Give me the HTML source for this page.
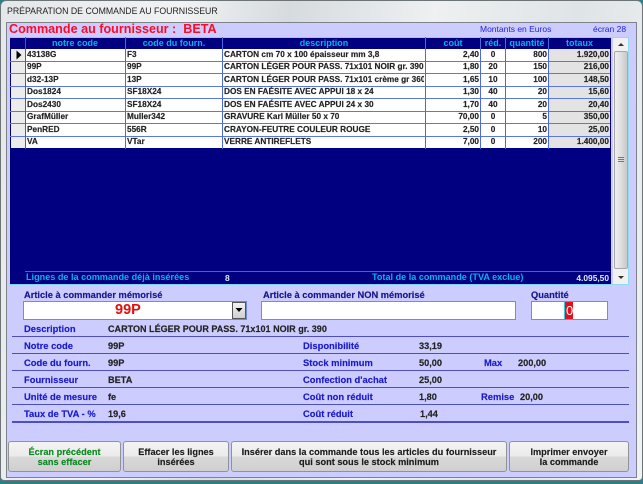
<!DOCTYPE html>
<html><head><meta charset="utf-8"><style>
*{box-sizing:border-box}
html,body{margin:0;padding:0}
body{width:643px;height:484px;overflow:hidden;position:relative;background:#2b7f86;font-family:"Liberation Sans",sans-serif}
.a,.a *{position:absolute}
.t{white-space:nowrap;font-size:10px;line-height:12px}
.win{left:0;top:0;width:643px;height:481px;border-radius:6px 6px 4px 4px;border:1px solid #6d7478;background:linear-gradient(100deg,#e4e7e9 0%,#f1f2f3 25%,#d6dbde 40%,#eef0f1 60%,#dfe4e6 80%,#f0f2f3 100%)}
.panel{left:6px;top:22px;width:631px;height:456px;background:#ccccff;border:1px solid #7d8388}
.h{color:#00b4f0;font-weight:bold;font-size:9px;text-align:center;top:37px;height:12px;line-height:12px}
.r{color:#222;font-weight:bold;font-size:8.25px;line-height:12px;white-space:nowrap;overflow:hidden;-webkit-text-stroke:0.15px #222}
.l{color:#1a1acc;font-weight:bold;font-size:9.4px;line-height:12px;white-space:nowrap;-webkit-text-stroke:0.15px #1a1acc}
.v{color:#222;font-weight:bold;font-size:9.2px;line-height:12px;white-space:nowrap;-webkit-text-stroke:0.15px #222}
.hl{left:12px;height:1px;background:#4d4dc4}
.b{top:441px;height:31px;border:1px solid #8f9396;border-radius:3px;background:linear-gradient(#f3f3f3 0,#ebebeb 48%,#d9d9d9 52%,#cfcfcf 100%);text-align:center;font-family:"Liberation Sans",sans-serif;font-weight:bold;font-size:9.2px;line-height:10px;padding-top:5px;color:#1c1c1c;white-space:nowrap;-webkit-text-stroke:0.15px currentColor}
.lab{color:#16168c;font-family:"Liberation Sans",sans-serif;font-weight:bold;font-size:9.3px;line-height:11px;white-space:nowrap;-webkit-text-stroke:0.15px #16168c}
</style></head><body>
<div class="a" style="left:0;top:0;width:643px;height:484px">
<div class="win"></div>
<div class="t" style="left:7px;top:5px;color:#222;font-size:8.75px;line-height:12px">PRÉPARATION DE COMMANDE AU FOURNISSEUR</div>
<div class="panel"></div>

<div class="t" style="left:9px;top:22px;color:#ff0a28;font-weight:bold;font-size:12.6px;line-height:15px;word-spacing:0">Commande au fournisseur :&nbsp; BETA</div>
<div class="t" style="left:480px;top:23px;color:#2222e0;font-size:8.5px;line-height:12px">Montants en Euros</div>
<div class="t" style="left:593px;top:23px;color:#2222e0;font-size:8.5px;line-height:12px">écran 28</div>

<!-- grid -->
<div style="left:10px;top:37px;width:601px;height:248px;background:#000080"></div>
<div style="left:10px;top:37px;width:619px;height:1px;background:#7fd4f0"></div>
<div style="left:10px;top:284px;width:601px;height:1px;background:#7fd4f0"></div>

<div class="h" style="left:25px;width:100px">notre code</div>
<div class="h" style="left:126px;width:96px">code du fourn.</div>
<div class="h" style="left:223px;width:202px">description</div>
<div class="h" style="left:426px;width:54px">coût</div>
<div class="h" style="left:481px;width:24px">réd.</div>
<div class="h" style="left:506px;width:42px">quantité</div>
<div class="h" style="left:549px;width:61px">totaux</div>

<!-- white body -->
<div style="left:25px;top:49px;width:523px;height:100px;background:#fff"></div>
<div style="left:549px;top:49px;width:61px;height:100px;background:#e3e3e3"></div>
<div style="left:11px;top:49px;width:14px;height:100px;background:#ececec"></div>

<!-- horizontal lines -->
<div style="left:10px;top:61px;width:600px;height:1px;background:#5a78e0"></div>
<div style="left:10px;top:73px;width:600px;height:1px;background:#5a78e0"></div>
<div style="left:10px;top:86px;width:600px;height:1px;background:#5a78e0"></div>
<div style="left:10px;top:98px;width:600px;height:1px;background:#5a78e0"></div>
<div style="left:10px;top:111px;width:600px;height:1px;background:#5a78e0"></div>
<div style="left:10px;top:123px;width:600px;height:1px;background:#5a78e0"></div>
<div style="left:10px;top:136px;width:600px;height:1px;background:#5a78e0"></div>
<div style="left:10px;top:148px;width:600px;height:1px;background:#000080"></div>

<!-- vertical lines -->
<div style="left:25px;top:37px;width:1px;height:112px;background:#3a5ad0"></div>
<div style="left:125px;top:37px;width:1px;height:112px;background:#4a6ae0"></div>
<div style="left:222px;top:37px;width:1px;height:112px;background:#4a6ae0"></div>
<div style="left:425px;top:37px;width:1px;height:112px;background:#4a6ae0"></div>
<div style="left:480px;top:37px;width:1px;height:112px;background:#4a6ae0"></div>
<div style="left:505px;top:37px;width:1px;height:112px;background:#4a6ae0"></div>
<div style="left:548px;top:37px;width:1px;height:112px;background:#4a6ae0"></div>

<svg style="left:15px;top:50px" width="8" height="10"><path d="M1.5 0.5 L6.5 5 L1.5 9.5 Z" fill="#000"/></svg>

<div class="r" style="left:27px;top:49px;width:96px">43138G</div><div class="r" style="left:127px;top:49px;width:94px">F3</div><div class="r" style="left:224px;top:49px;width:200px">CARTON cm 70 x 100 épaisseur mm 3,8</div><div class="r" style="left:426px;top:49px;width:53px;text-align:right">2,40</div><div class="r" style="left:481px;top:49px;width:24px;text-align:center">0</div><div class="r" style="left:506px;top:49px;width:41px;text-align:right">800</div><div class="r" style="left:549px;top:49px;width:60px;text-align:right">1.920,00</div>
<div class="r" style="left:27px;top:61px;width:96px">99P</div><div class="r" style="left:127px;top:61px;width:94px">99P</div><div class="r" style="left:224px;top:61px;width:200px">CARTON LÉGER POUR PASS. 71x101 NOIR gr. 390</div><div class="r" style="left:426px;top:61px;width:53px;text-align:right">1,80</div><div class="r" style="left:481px;top:61px;width:24px;text-align:center">20</div><div class="r" style="left:506px;top:61px;width:41px;text-align:right">150</div><div class="r" style="left:549px;top:61px;width:60px;text-align:right">216,00</div>
<div class="r" style="left:27px;top:74px;width:96px">d32-13P</div><div class="r" style="left:127px;top:74px;width:94px">13P</div><div class="r" style="left:224px;top:74px;width:200px">CARTON LÉGER POUR PASS. 71x101 crème gr 360</div><div class="r" style="left:426px;top:74px;width:53px;text-align:right">1,65</div><div class="r" style="left:481px;top:74px;width:24px;text-align:center">10</div><div class="r" style="left:506px;top:74px;width:41px;text-align:right">100</div><div class="r" style="left:549px;top:74px;width:60px;text-align:right">148,50</div>
<div class="r" style="left:27px;top:86px;width:96px">Dos1824</div><div class="r" style="left:127px;top:86px;width:94px">SF18X24</div><div class="r" style="left:224px;top:86px;width:200px">DOS EN FAÉSITE AVEC APPUI 18 x 24</div><div class="r" style="left:426px;top:86px;width:53px;text-align:right">1,30</div><div class="r" style="left:481px;top:86px;width:24px;text-align:center">40</div><div class="r" style="left:506px;top:86px;width:41px;text-align:right">20</div><div class="r" style="left:549px;top:86px;width:60px;text-align:right">15,60</div>
<div class="r" style="left:27px;top:99px;width:96px">Dos2430</div><div class="r" style="left:127px;top:99px;width:94px">SF18X24</div><div class="r" style="left:224px;top:99px;width:200px">DOS EN FAÉSITE AVEC APPUI 24 x 30</div><div class="r" style="left:426px;top:99px;width:53px;text-align:right">1,70</div><div class="r" style="left:481px;top:99px;width:24px;text-align:center">40</div><div class="r" style="left:506px;top:99px;width:41px;text-align:right">20</div><div class="r" style="left:549px;top:99px;width:60px;text-align:right">20,40</div>
<div class="r" style="left:27px;top:111px;width:96px">GrafMüller</div><div class="r" style="left:127px;top:111px;width:94px">Muller342</div><div class="r" style="left:224px;top:111px;width:200px">GRAVURE Karl Müller 50 x 70</div><div class="r" style="left:426px;top:111px;width:53px;text-align:right">70,00</div><div class="r" style="left:481px;top:111px;width:24px;text-align:center">0</div><div class="r" style="left:506px;top:111px;width:41px;text-align:right">5</div><div class="r" style="left:549px;top:111px;width:60px;text-align:right">350,00</div>
<div class="r" style="left:27px;top:124px;width:96px">PenRED</div><div class="r" style="left:127px;top:124px;width:94px">556R</div><div class="r" style="left:224px;top:124px;width:200px">CRAYON-FEUTRE COULEUR ROUGE</div><div class="r" style="left:426px;top:124px;width:53px;text-align:right">2,50</div><div class="r" style="left:481px;top:124px;width:24px;text-align:center">0</div><div class="r" style="left:506px;top:124px;width:41px;text-align:right">10</div><div class="r" style="left:549px;top:124px;width:60px;text-align:right">25,00</div>
<div class="r" style="left:27px;top:136px;width:96px">VA</div><div class="r" style="left:127px;top:136px;width:94px">VTar</div><div class="r" style="left:224px;top:136px;width:200px">VERRE ANTIREFLETS</div><div class="r" style="left:426px;top:136px;width:53px;text-align:right">7,00</div><div class="r" style="left:481px;top:136px;width:24px;text-align:center">0</div><div class="r" style="left:506px;top:136px;width:41px;text-align:right">200</div><div class="r" style="left:549px;top:136px;width:60px;text-align:right">1.400,00</div>

<!-- footer of grid -->
<div style="left:25px;top:271px;width:585px;height:1px;background:#1e78c8"></div>
<div class="t" style="left:26px;top:271px;color:#00b4f0;font-weight:bold;font-size:9.1px">Lignes de la commande déjà insérées</div>
<div class="t" style="left:225px;top:272px;color:#dfe8ff;font-weight:bold;font-size:8.5px">8</div>
<div class="t" style="left:372px;top:271px;color:#00b4f0;font-weight:bold;font-size:9.1px">Total de la commande (TVA exclue)</div>
<div class="t" style="left:540px;top:272px;width:69px;text-align:right;color:#dfe8ff;font-weight:bold;font-size:8.4px">4.095,50</div>

<!-- scrollbar -->
<div style="left:611px;top:37px;width:18px;height:248px;background:#f1f1f1;border:1px solid #8fdcf0;border-left:2px solid #ccccff"></div>
<svg style="left:615px;top:40px" width="12" height="10"><path d="M3 6 L6 3 L9 6 Z" fill="#333"/></svg>
<div style="left:614px;top:51px;width:14px;height:218px;background:linear-gradient(90deg,#f0f0f0,#dedede 50%,#c8c8c8);border:1px solid #a8a8a8;border-radius:2px"></div>
<svg style="left:617px;top:156px" width="8" height="8"><path d="M1 1.5H7M1 3.5H7M1 5.5H7" stroke="#777" stroke-width="1"/></svg>
<svg style="left:615px;top:272px" width="12" height="10"><path d="M3 4 L6 7 L9 4 Z" fill="#333"/></svg>

<!-- input labels -->
<div class="lab" style="left:24px;top:290px">Article à commander mémorisé</div>
<div class="lab" style="left:263px;top:290px">Article à commander NON mémorisé</div>
<div class="lab" style="left:531px;top:290px">Quantité</div>

<!-- inputs -->
<div style="left:23px;top:301px;width:224px;height:19px;background:#fff;border:1px solid #6e8ce0"></div>
<div class="t" style="left:115px;top:303px;color:#e01010;font-weight:bold;font-size:14.5px;line-height:15px">99P</div>
<div style="left:232px;top:302px;width:14px;height:17px;background:linear-gradient(#f2f2f2,#cfcfcf);border:1px solid #555"></div>
<svg style="left:235px;top:307px" width="8" height="6"><path d="M0.5 1 H7.5 L4 5 Z" fill="#000"/></svg>
<div style="left:261px;top:301px;width:255px;height:19px;background:#fff;border:1px solid #6e8ce0"></div>
<div style="left:531px;top:301px;width:77px;height:19px;background:#fff;border:1px solid #6e8ce0"></div>
<div style="left:565px;top:302px;width:8px;height:17px;background:#e0101c"></div>
<div style="left:564px;top:302px;width:1px;height:17px;background:#38c8e0"></div>
<div class="t" style="left:566px;top:303px;color:#fff;font-size:13px;line-height:15px">0</div>

<!-- details -->
<div class="l" style="left:24px;top:323px">Description</div>
<div class="v" style="left:108px;top:323px;font-size:9.05px">CARTON LÉGER POUR PASS. 71x101 NOIR gr. 390</div>
<div class="hl" style="top:336px;width:617px"></div>
<div class="l" style="left:24px;top:340px">Notre code</div><div class="v" style="left:108px;top:340px">99P</div>
<div class="l" style="left:303px;top:340px">Disponibilité</div><div class="v" style="left:419px;top:340px">33,19</div>
<div class="hl" style="top:353px;width:617px"></div>
<div class="l" style="left:24px;top:357px">Code du fourn.</div><div class="v" style="left:108px;top:357px">99P</div>
<div class="l" style="left:303px;top:357px">Stock minimum</div><div class="v" style="left:419px;top:357px">50,00</div>
<div class="l" style="left:484px;top:357px">Max</div><div class="v" style="left:518px;top:357px">200,00</div>
<div class="hl" style="top:370px;width:617px"></div>
<div class="l" style="left:24px;top:374px">Fournisseur</div><div class="v" style="left:108px;top:374px">BETA</div>
<div class="l" style="left:303px;top:374px">Confection d'achat</div><div class="v" style="left:419px;top:374px">25,00</div>
<div class="hl" style="top:387px;width:617px"></div>
<div class="l" style="left:24px;top:391px">Unité de mesure</div><div class="v" style="left:108px;top:391px">fe</div>
<div class="l" style="left:303px;top:391px">Coût non réduit</div><div class="v" style="left:419px;top:391px">1,80</div>
<div class="l" style="left:481px;top:391px">Remise</div><div class="v" style="left:520px;top:391px">20,00</div>
<div class="hl" style="top:404px;width:617px"></div>
<div class="l" style="left:24px;top:408px">Taux de TVA - %</div><div class="v" style="left:108px;top:408px">19,6</div>
<div class="l" style="left:303px;top:408px">Coût réduit</div><div class="v" style="left:420px;top:408px">1,44</div>
<div class="hl" style="top:421px;width:617px;height:2px"></div>

<!-- buttons -->
<div class="b" style="left:8px;width:113px;color:#0a8a1e">Écran précédent<br>sans effacer</div>
<div class="b" style="left:123px;width:106px">Effacer les lignes<br>insérées</div>
<div class="b" style="left:231px;width:276px">Insérer dans la commande tous les articles du fournisseur<br>qui sont sous le stock minimum</div>
<div class="b" style="left:509px;width:120px">Imprimer envoyer<br>la commande</div>
</div>
</body></html>
